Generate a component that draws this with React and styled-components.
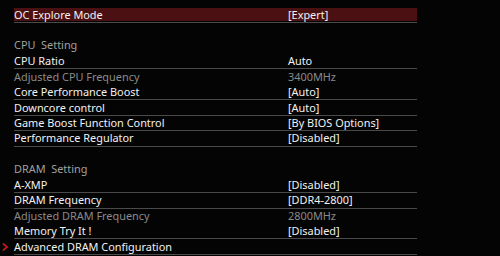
import React from 'react';
import styled, { createGlobalStyle } from 'styled-components';

const GlobalStyle = createGlobalStyle`
  html, body {
    margin: 0;
    padding: 0;
    background: #040404;
  }
  body {
    font-family: "Noto Sans", "Open Sans", sans-serif;
  }
`;

const Screen = styled.div`
  width: 500px;
  height: 256px;
  padding-top: 8px;
  box-sizing: border-box;
  background: #040404;
  overflow: hidden;
`;

const Row = styled.div`
  display: flex;
  height: ${(p) => (p.$top ? '15px' : '15.45px')};
  width: 417px;
`;

const Marker = styled.div`
  width: 14px;
  display: flex;
  align-items: center;
  padding-left: 2px;
  box-sizing: border-box;
`;

const Body = styled.div`
  flex: 1;
  display: flex;
  align-items: center;
  box-sizing: border-box;
  border-bottom: 1px solid ${(p) => (p.$disabled ? 'transparent' : '#4a4a4a')};
  background: ${(p) => (p.$active ? '#4b1012' : 'transparent')};
  background-clip: content-box;
  padding-bottom: ${(p) => (p.$active ? '1px' : '0')};
  font-size: 10.9px;
  color: ${(p) => (p.$disabled ? '#8a8a8a' : '#f2f2f2')};
  white-space: pre;
`;

const Label = styled.span`
  width: 274px;
  line-height: 14px;
`;

const Value = styled.span`
  flex: 1;
  line-height: 14px;
`;

const Header = styled.div`
  height: 31px;
  box-sizing: border-box;
  padding: 14px 0 0 14px;
  font-size: 10.9px;
  line-height: 16px;
  color: #a0a0a0;
  white-space: pre;
`;

function Chevron() {
  return (
    <svg width="7" height="10" viewBox="0 0 7 10">
      <path d="M0.8 0.5 L6.5 5 L0.8 9.5 L0.8 7.2 L3.8 5 L0.8 2.8 Z" fill="#cc161c" />
    </svg>
  );
}

function Item({ label, value, disabled, active, top, arrow }) {
  return (
    <Row $top={top}>
      <Marker>{arrow && <Chevron />}</Marker>
      <Body $disabled={disabled} $active={active}>
        <Label>{label}</Label>
        <Value>{value}</Value>
      </Body>
    </Row>
  );
}

const cpu = [
  { label: 'CPU Ratio', value: 'Auto' },
  { label: 'Adjusted CPU Frequency', value: '3400MHz', disabled: true },
  { label: 'Core Performance Boost', value: '[Auto]' },
  { label: 'Downcore control', value: '[Auto]' },
  { label: 'Game Boost Function Control', value: '[By BIOS Options]' },
  { label: 'Performance Regulator', value: '[Disabled]' },
];

const dram = [
  { label: 'A-XMP', value: '[Disabled]' },
  { label: 'DRAM Frequency', value: '[DDR4-2800]' },
  { label: 'Adjusted DRAM Frequency', value: '2800MHz', disabled: true },
  { label: 'Memory Try It !', value: '[Disabled]' },
  { label: 'Advanced DRAM Configuration', value: '', arrow: true },
];

export default function App() {
  return (
    <Screen>
      <GlobalStyle />
      <Item label="OC Explore Mode" value="[Expert]" active top />
      <Header>CPU  Setting</Header>
      {cpu.map((it) => (
        <Item key={it.label} {...it} />
      ))}
      <Header>DRAM  Setting</Header>
      {dram.map((it) => (
        <Item key={it.label} {...it} />
      ))}
    </Screen>
  );
}
